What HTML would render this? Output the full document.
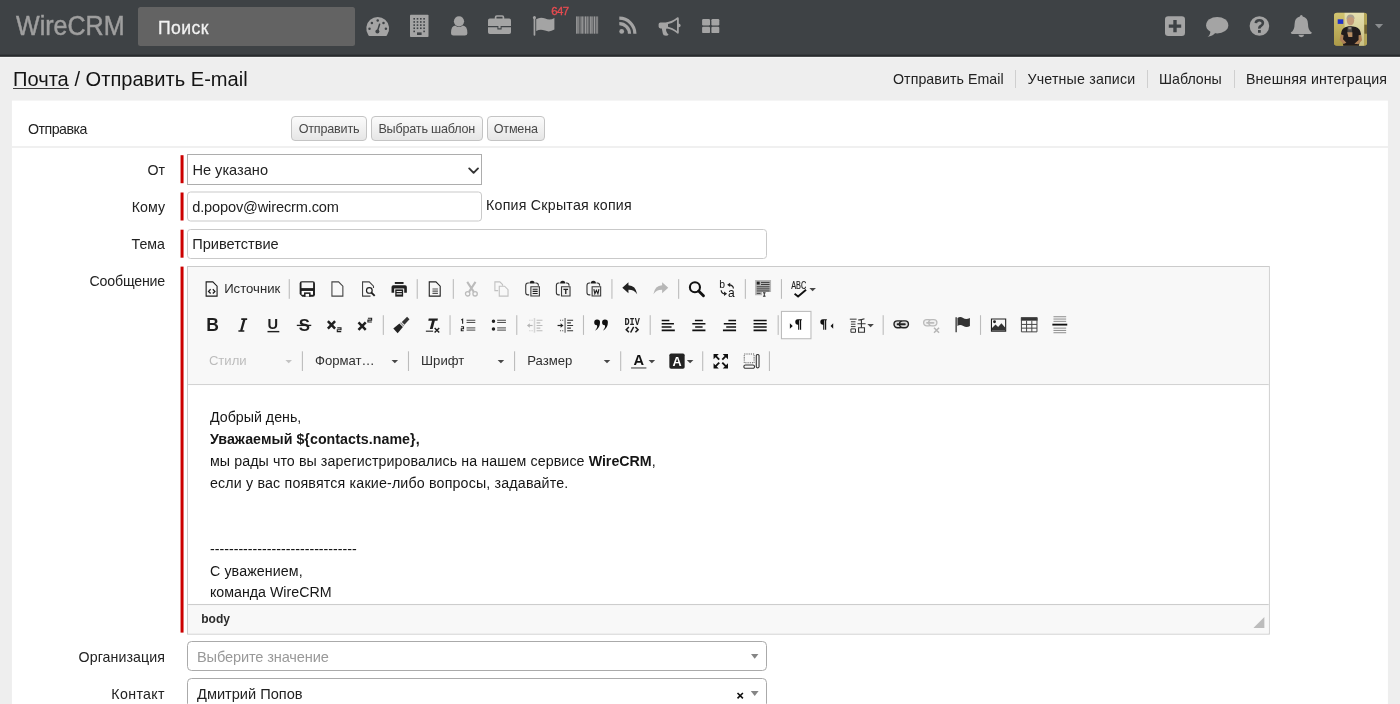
<!DOCTYPE html>
<html lang="ru">
<head>
<meta charset="utf-8">
<title>WireCRM</title>
<style>
*{box-sizing:border-box;margin:0;padding:0}
html,body{width:1400px;height:704px;overflow:hidden;background:#eee;font-family:"Liberation Sans",sans-serif;color:#222}
.abs{position:absolute}
#nav{position:absolute;left:0;top:0;width:1400px;height:57.6px;background:linear-gradient(#3e4245 0,#3e4245 54.2px,#2a2d30 54.9px,#25282a 56.2px,#6b6d6e 56.8px,#f6f6f6 57.2px,#f4f4f4 57.6px)}
#brand{position:absolute;left:16.4px;top:9px;font-size:27px;line-height:34px;color:#9f9f9f;white-space:nowrap;transform:scaleX(.928);transform-origin:0 0;-webkit-text-stroke:.5px #9d9d9d}
#search{position:absolute;left:138px;top:7px;width:216.5px;height:39px;background:#636363;border-radius:2.5px}
#search span{position:absolute;left:20px;top:10px;font-size:17.6px;line-height:22px;color:#f2f2f2;letter-spacing:.45px;-webkit-text-stroke:.3px #f2f2f2}
.nico{position:absolute;fill:#a3a3a3}
#badge{position:absolute;left:551.2px;top:5.2px;font-size:11.4px;line-height:13px;color:#e64b50;letter-spacing:-.6px;-webkit-text-stroke:.35px #e64b50}
#title{position:absolute;left:13px;top:66px;font-size:20.1px;line-height:26px;color:#141414;white-space:nowrap}
#title u{text-decoration:none}
#tul{position:absolute;left:13px;top:87.5px;width:56.3px;height:1.5px;background:#3a3a3a}
.sub{position:absolute;top:70px;font-size:14.2px;line-height:18px;color:#222;white-space:nowrap}
.subsep{position:absolute;top:70px;width:1.1px;height:18px;background:#cfcfcf}
#panel{position:absolute;left:12px;top:100px;width:1376.2px;height:620px;background:#fff;transform:translate(-.1px,.6px)}
.lbl{position:absolute;font-size:14.2px;line-height:18px;color:#222;white-space:nowrap;text-align:right;width:150px;left:15px}
.btn{position:absolute;top:116px;height:25px;padding-top:1px;border:1px solid #c4c4c4;border-radius:4px;background:linear-gradient(#fbfbfb,#e6e6e6);font-size:12.6px;line-height:23.5px;color:#484848;letter-spacing:-.2px;text-align:center;white-space:nowrap}
.red{position:absolute;left:181px;width:3px;background:#cc0000;transform:translateX(-.45px)}
.inp{position:absolute;left:187px;height:30px;border:1px solid #c9c9c9;border-radius:3.5px;background:#fff;font-size:14.6px;line-height:28px;padding-left:4.2px;color:#222;white-space:nowrap}
.s2{position:absolute;left:187px;width:579.5px;height:30px;border:1.1px solid #aaa;border-radius:4.5px;background:#fff;font-size:14.6px;line-height:31px;padding-left:9px;color:#222;white-space:nowrap}
.s2 i{position:absolute;right:6.9px;top:12px;width:7.8px;height:5px;background:#858585;clip-path:polygon(0 0,100% 0,50% 100%)}

#ed{position:absolute;left:187.3px;top:265.8px;width:989.6px;transform:scale(1.09375);transform-origin:0 0;border:1px solid #cbcbcb;background:#fff;font-size:12px;color:#484848}
.ctop{background:#f8f8f8;border-bottom:1px solid #cdcdcd;padding:6px 8px 2px;height:108px}
.row{height:33px;padding-top:1px;white-space:nowrap;font-size:0}
.cb{display:inline-block;vertical-align:top;height:26px;padding:4px 6px;position:relative}
.cb.on{background:#fff;border:1px solid #bcbcbc;padding:3px 5px}
.ci{display:inline-block;vertical-align:top;width:16px;height:16px;margin-top:1px;overflow:visible}
.cb.dis .ci{opacity:.3}
.cl{display:inline-block;vertical-align:top;font-size:12px;line-height:17px;margin-top:1px;padding-left:3px;width:54.2px;color:#2a2a2a;letter-spacing:0}
.ar{display:inline-block;vertical-align:top;margin:8px 0 0 1px;width:0;height:0;border-left:3px solid transparent;border-right:3px solid transparent;border-top:3px solid #474747}
.sp{display:inline-block;vertical-align:top;width:1px;height:18px;margin:4px 2px 0;background:#bcbcbc}
.co{display:inline-block;vertical-align:top;width:97px;height:28px;position:relative;margin-top:-1px}
.co:after{content:"";position:absolute;right:0;top:5px;height:18px;border-right:1px solid #bcbcbc}
.ct{position:absolute;left:11px;top:.4px;transform:translateY(.8px);font-size:12px;line-height:26px;color:#303030}
.co.dis .ct{opacity:.3}.co.dis .ca{opacity:.3}
.ca{position:absolute;left:81px;top:13px;width:0;height:0;border-left:3px solid transparent;border-right:3px solid transparent;border-top:3px solid #484848}
.cbody{height:200px;overflow:hidden;padding:20px;font-size:13px;line-height:20px;color:#161616;background:#fff}
.cbody p{margin:0;white-space:nowrap}
.cbot{position:relative;height:26.6px;border-top:1px solid #cdcdcd;background:#f8f8f8}
.pth{position:absolute;left:12px;top:5.5px;font-size:11px;line-height:13px;font-weight:bold;color:#2c2c2c}
.rsz{position:absolute;right:4px;bottom:4.2px;width:0;height:0;border-style:solid;border-width:10px 10px 0 0;border-color:transparent #bcbcbc transparent transparent}

</style>
</head>
<body>
<div id="wrap" style="position:absolute;left:0;top:0;width:1400px;height:704px;will-change:transform">
<div id="nav">
  <div id="brand">WireCRM</div>
  <div id="search"><span>Поиск</span></div>
  <div id="badge">647</div>
<svg style="position:absolute;left:0;top:0" width="1400" height="56" viewBox="0 0 1400 56"><path fill="#a4a4a4" d="M369.58 35.9Q368.58 35.9 368.18 34.70A11.4 11.4 0 1 1 387.22 34.70Q386.82 35.9 385.82 35.9Z"/><circle cx="369.50" cy="28.80" r="1.25" fill="#3e4245"/><circle cx="371.90" cy="23.00" r="1.25" fill="#3e4245"/><circle cx="377.70" cy="20.60" r="1.25" fill="#3e4245"/><circle cx="383.50" cy="23.00" r="1.25" fill="#3e4245"/><circle cx="385.90" cy="28.80" r="1.25" fill="#3e4245"/><circle cx="377.4" cy="31.400000000000002" r="2" fill="#3e4245"/><path d="M377.4 31.400000000000002L379.59999999999997 24.200000000000003" stroke="#3e4245" stroke-width="1.5" stroke-linecap="round"/><rect x="410" y="14.7" width="18.5" height="22.4" rx="0.8" fill="#a4a4a4"/><rect x="413.40" y="18.00" width="1.6" height="1.6" fill="#3e4245"/><rect x="413.40" y="21.15" width="1.6" height="1.6" fill="#3e4245"/><rect x="413.40" y="24.30" width="1.6" height="1.6" fill="#3e4245"/><rect x="413.40" y="27.45" width="1.6" height="1.6" fill="#3e4245"/><rect x="413.40" y="30.60" width="1.6" height="1.6" fill="#3e4245"/><rect x="416.70" y="18.00" width="1.6" height="1.6" fill="#3e4245"/><rect x="416.70" y="21.15" width="1.6" height="1.6" fill="#3e4245"/><rect x="416.70" y="24.30" width="1.6" height="1.6" fill="#3e4245"/><rect x="416.70" y="27.45" width="1.6" height="1.6" fill="#3e4245"/><rect x="420.00" y="18.00" width="1.6" height="1.6" fill="#3e4245"/><rect x="420.00" y="21.15" width="1.6" height="1.6" fill="#3e4245"/><rect x="420.00" y="24.30" width="1.6" height="1.6" fill="#3e4245"/><rect x="420.00" y="27.45" width="1.6" height="1.6" fill="#3e4245"/><rect x="423.30" y="18.00" width="1.6" height="1.6" fill="#3e4245"/><rect x="423.30" y="21.15" width="1.6" height="1.6" fill="#3e4245"/><rect x="423.30" y="24.30" width="1.6" height="1.6" fill="#3e4245"/><rect x="423.30" y="27.45" width="1.6" height="1.6" fill="#3e4245"/><rect x="423.30" y="30.60" width="1.6" height="1.6" fill="#3e4245"/><rect x="417" y="32.4" width="4.6" height="2.6" fill="#3e4245"/><circle cx="459" cy="21.3" r="5.1" fill="#a4a4a4"/><path fill="#a4a4a4" d="M451 33.2Q451 26 455.2 25.6Q459 28.6 462.8 25.6Q467.4 26 467.4 33.2Q467.4 35.5 464.8 35.5H453.4Q451 35.5 451 33.2Z"/><path fill="none" stroke="#a4a4a4" stroke-width="1.7" d="M495.6 19V17.2Q495.6 16 496.8 16H502.2Q503.4 16 503.4 17.2V19"/><path fill="#a4a4a4" d="M489.8 18.4H509.2Q511 18.4 511 20.2V26H488V20.2Q488 18.4 489.8 18.4Z"/><path fill="#a4a4a4" d="M488 27.2H497.4V29.4H501.6V27.2H511V32.2Q511 34 509.2 34H489.8Q488 34 488 32.2Z"/><rect x="498.4" y="26" width="2.2" height="2.3" fill="#a4a4a4"/><rect x="533.6" y="17.4" width="1.7" height="18.3" rx="0.8" fill="#a4a4a4"/><circle cx="534.45" cy="17.4" r="1.5" fill="#a4a4a4"/><path fill="#a4a4a4" d="M536.2 19.2Q540.4 16.4 545.2 18.6T554.4 18V29.6Q549.6 32.6 545 30.6T536.2 31Z"/><rect x="576.10" y="16.4" width="1.6" height="17.3" fill="#a4a4a4" opacity="0.9"/><rect x="578.30" y="16.4" width="0.8" height="17.3" fill="#a4a4a4" opacity="0.9"/><rect x="579.70" y="16.4" width="0.8" height="17.3" fill="#a4a4a4" opacity="0.9"/><rect x="581.30" y="16.4" width="1.6" height="17.3" fill="#a4a4a4" opacity="0.9"/><rect x="583.50" y="16.4" width="0.8" height="17.3" fill="#a4a4a4" opacity="0.9"/><rect x="584.90" y="16.4" width="1.6" height="17.3" fill="#a4a4a4" opacity="0.9"/><rect x="587.10" y="16.4" width="0.8" height="17.3" fill="#a4a4a4" opacity="0.9"/><rect x="588.50" y="16.4" width="0.8" height="17.3" fill="#a4a4a4" opacity="0.9"/><rect x="590.10" y="16.4" width="1.6" height="17.3" fill="#a4a4a4" opacity="0.9"/><rect x="592.30" y="16.4" width="0.8" height="17.3" fill="#a4a4a4" opacity="0.9"/><rect x="593.70" y="16.4" width="1.6" height="17.3" fill="#a4a4a4" opacity="0.9"/><rect x="595.90" y="16.4" width="0.8" height="17.3" fill="#a4a4a4" opacity="0.9"/><rect x="597.30" y="16.4" width="0.8" height="17.3" fill="#a4a4a4" opacity="0.9"/><circle cx="621.6999999999999" cy="31.4" r="2.4" fill="#a4a4a4"/><path fill="none" stroke="#a4a4a4" stroke-width="3.2" d="M619.3 23.599999999999998A10.2 10.2 0 0 1 629.5 33.8M619.3 18.199999999999996A15.6 15.6 0 0 1 634.9 33.8"/><path fill="#a4a4a4" d="M660.4 22.4H665.6Q672 21.6 677.4 17.2Q678.8 17 678.8 18.4V23.6Q680.7 24 680.7 25.4T678.8 27.2V32.4Q678.8 33.8 677.4 33.6Q672 29.2 666.6 28.6Q665.4 29.6 666.4 31.4Q667 33.6 668.6 34.4Q668 35.8 665.2 35.6Q663.4 35.6 662.8 33.4L661.8 28.4H660.4Q658.6 28.4 658.6 26.6V24.2Q658.6 22.4 660.4 22.4Z"/><path fill="#3e4245" d="M677 19.8V31Q672.6 27.6 668 26.8V24Q672.6 23.2 677 19.8Z"/><rect x="702.10" y="19.10" width="7.9" height="6.4" rx="1.2" fill="#a4a4a4"/><rect x="702.10" y="26.70" width="7.9" height="6.4" rx="1.2" fill="#a4a4a4"/><rect x="711.40" y="19.10" width="7.9" height="6.4" rx="1.2" fill="#a4a4a4"/><rect x="711.40" y="26.70" width="7.9" height="6.4" rx="1.2" fill="#a4a4a4"/><rect x="1165" y="16.3" width="20" height="19.6" rx="3.2" fill="#a4a4a4"/><path stroke="#3e4245" stroke-width="3.4" d="M1168.8 26.1H1181.2M1175 19.9V32.3"/><ellipse cx="1217.2" cy="25.2" rx="11.1" ry="8.3" fill="#a4a4a4"/><path fill="#a4a4a4" d="M1210.4 30.4Q1210.6 34.6 1207.6 36.8Q1212.6 36.4 1215.6 32.6Z"/><circle cx="1259.4" cy="26" r="9.8" fill="#a4a4a4"/><path fill="none" stroke="#3e4245" stroke-width="2.6" d="M1255.8 23.2Q1256 20.2 1259.4 20.2T1262.9 23Q1262.9 24.8 1261 25.8T1259.4 28.6"/><rect x="1258" y="30" width="2.8" height="2.8" fill="#3e4245"/><path fill="#a4a4a4" d="M1301.3 14.9Q1302.7 14.9 1302.7 16.4Q1308 17.6 1308 24Q1308 30.4 1311.8 32.6Q1311.8 34 1310.4 34H1292.2Q1290.8 34 1290.8 32.6Q1294.6 30.4 1294.6 24Q1294.6 17.6 1299.9 16.4Q1299.9 14.9 1301.3 14.9Z"/><path fill="#a4a4a4" d="M1298.4 34.8H1304.2Q1303.8 37.2 1301.3 37.2T1298.4 34.8Z"/><path fill="#8a8d8f" d="M1374.9 24H1383.1L1379 28.5Z"/><g transform="translate(1334,12.7)"><clipPath id="avc"><rect width="33" height="33" rx="3"/></clipPath>
<filter id="avb" x="-10%" y="-10%" width="120%" height="120%"><feGaussianBlur stdDeviation="0.55"/></filter>
<linearGradient id="avg1" x1="0" y1="0" x2="0" y2="1"><stop offset="0" stop-color="#d3c672"/><stop offset="1" stop-color="#ab9947"/></linearGradient>
<linearGradient id="avg2" x1="0" y1="0" x2="0" y2="1"><stop offset="0" stop-color="#e6e0b0"/><stop offset="1" stop-color="#c9c084"/></linearGradient>
<g clip-path="url(#avc)"><rect width="33" height="33" fill="#b9a955"/><g filter="url(#avb)">
<rect x="-1" y="-1" width="12" height="35" fill="url(#avg1)"/><rect x="10.6" y="-1" width="20" height="35" fill="url(#avg2)"/>
<rect x="30" y="-1" width="4" height="35" fill="#b3a558"/><rect x="30.4" y="12" width="3" height="9" fill="#6f6232"/>
<rect x="3.7" y="6.6" width="5.6" height="4.6" fill="#2233c8"/>
<ellipse cx="16.5" cy="7.8" rx="3.7" ry="4.8" fill="#c29a78"/><path d="M12.4 7Q12.6 1.8 16.6 1.9T20.6 6.6Q18.6 4 16.4 4.4T12.4 7Z" fill="#a9a08f"/>
<path d="M9.4 34Q8.6 27 7 21.4Q7.4 15.8 11.8 14.4Q16.6 12.8 21.8 14.4Q26.4 15.8 27 21.4Q25.6 27 24.8 34Z" fill="#211d1e"/>
<path d="M6.8 21.6L5.6 27.4L9.6 31.4L12.4 30L9 26.6L9.6 22.6Z" fill="#b08258"/><path d="M27.2 22L28 27.6L24.4 31.6L20.4 31L24.6 27.4L24.6 22.6Z" fill="#b08258"/>
<rect x="13.5" y="13.6" width="4.6" height="6.6" rx="0.8" fill="#4a4543"/><rect x="14.4" y="14.4" width="2.8" height="2.2" fill="#8f867c"/>
<path d="M13.2 19.6H18.4V24.4H14.4Z" fill="#b88d63"/>
</g></g></g></svg>
</div>
<div id="tul"></div>
<div id="title"><u>Почта</u> / Отправить E-mail</div>
<div class="sub" style="left:893px;letter-spacing:.06px">Отправить Email</div>
<div class="subsep" style="left:1015px"></div>
<div class="sub" style="left:1027.5px;letter-spacing:.19px">Учетные записи</div>
<div class="subsep" style="left:1146.5px"></div>
<div class="sub" style="left:1159px">Шаблоны</div>
<div class="subsep" style="left:1234.3px"></div>
<div class="sub" style="left:1246px;letter-spacing:.15px">Внешняя интеграция</div>

<div id="panel"></div>
<div class="abs" style="left:28px;top:120px;font-size:14.2px;line-height:18px;letter-spacing:-.5px">Отправка</div>
<div class="btn" style="left:291px;width:76px">Отправить</div>
<div class="btn" style="left:371px;width:111.5px">Выбрать шаблон</div>
<div class="btn" style="left:487px;width:57.5px">Отмена</div>
<div class="abs" style="left:12px;top:146px;width:1376px;height:1.6px;background:#f0f0f0"></div>

<div class="lbl" style="top:161px">От</div>
<div class="red" style="top:155px;height:28px;transform:translate(-.45px,.2px)"></div>
<div class="inp" style="top:154px;width:295px;height:30.6px;border-radius:0;border:1px solid #adadad;line-height:30.6px;padding-left:4.4px">Не указано<svg style="position:absolute;left:279px;top:10.6px" width="14" height="10" viewBox="0 0 14 10"><path d="M2.2 2.4L6.6 6.8L11 2.4" fill="none" stroke="#333" stroke-width="1.9" stroke-linecap="round" stroke-linejoin="round"/></svg></div>

<div class="lbl" style="top:198px">Кому</div>
<div class="red" style="top:192px;height:28px;transform:translate(-.45px,.5px)"></div>
<div class="inp" style="top:191px;width:295px;transform:translateY(.5px);letter-spacing:-.15px">d.popov@wirecrm.com</div>
<div class="abs" style="left:486px;top:196px;font-size:14.2px;line-height:18px;white-space:nowrap;letter-spacing:.24px">Копия Скрытая копия</div>

<div class="lbl" style="top:235px">Тема</div>
<div class="red" style="top:229px;height:28px;transform:translate(-.45px,.7px)"></div>
<div class="inp" style="top:229px;width:579.5px">Приветствие</div>

<div class="lbl" style="top:272px;letter-spacing:-.19px">Сообщение</div>
<div class="red" style="top:266px;height:366px;transform:translate(-.45px,.6px)"></div>

<div id="ed"><div class="ctop"><div class="row"><span class="cb src"><svg class="ci" viewBox="0 0 16 16"><path d="M2.5 1.5H8.6L12.5 5.4V14.5H2.5Z" fill="none" stroke="#1a1a1a" stroke-width="1" /><path d="M6.6 8.2L4.7 10.2L6.6 12.2M8.6 8.2L10.5 10.2L8.6 12.2" fill="none" stroke="#1f1f1f" stroke-width="1.2" /></svg><span class="cl">Источник</span></span><span class="sp"></span><span class="cb"><svg class="ci" viewBox="0 0 16 16"><path d="M3 1H13Q15 1 15 3V13Q15 15 13 15H3.4L1 12.6V3Q1 1 3 1Z" fill="#1f1f1f" /><path d="M2.7 2H13.3V7.2H2.7Z" fill="#f6f6f6" /><path d="M2.8 9.8H13.2V13.3H2.8Z" fill="#fff" /><path d="M5 11.1H11V15H5Z" fill="#1f1f1f" /><path d="M6.4 12.5H9.6V15H6.4Z" fill="#fff" /></svg></span><span class="cb"><svg class="ci" viewBox="0 0 16 16"><path d="M2.5 1.5H8.6L12.5 5.4V14.5H2.5Z" fill="none" stroke="#444" stroke-width="1" /></svg></span><span class="cb"><svg class="ci" viewBox="0 0 16 16"><path d="M9.8 14.5H2.5V1.5H8.6L12.5 5.4V7" fill="none" stroke="#444" stroke-width="1" /><path d="M11.3 9.3A2.6 2.6 0 1 1 6.1 9.3A2.6 2.6 0 1 1 11.3 9.3Z" fill="none" stroke="#1f1f1f" stroke-width="1.1" /><path d="M10.6 11.3L13.6 14.3" fill="none" stroke="#1f1f1f" stroke-width="1.8" /></svg></span><span class="cb"><svg class="ci" viewBox="0 0 16 16"><path d="M4 1.6H12V3.4H4Z" fill="#1f1f1f" /><path d="M2.6 4.6H13.4Q15 4.6 15 6.2V11.4H12.6V7.6H3.4V11.4H1V6.2Q1 4.6 2.6 4.6Z" fill="#1f1f1f" /><path d="M4.4 8.4H11.6V15H4.4Z" fill="#1f1f1f" /><path d="M5.6 9.8H10.4V10.8H5.6ZM5.6 12H10.4V13H5.6Z" fill="#eee" /></svg></span><span class="sp"></span><span class="cb"><svg class="ci" viewBox="0 0 16 16"><path d="M2.5 1.5H8.6L12.5 5.4V14.5H2.5Z" fill="none" stroke="#222" stroke-width="1" /><path d="M5.4 8H10.4M5.4 10H10.4M5.4 12H10.4" fill="none" stroke="#555" stroke-width="1" /></svg></span><span class="sp"></span><span class="cb dis"><svg class="ci" viewBox="0 0 16 16"><path d="M4.2 1.5L10.2 10.6M11.8 1.5L5.8 10.6" fill="none" stroke="#333" stroke-width="1.9" /><path d="M6.6 12.4A2 2 0 1 1 2.6 12.4A2 2 0 1 1 6.6 12.4ZM13.4 12.4A2 2 0 1 1 9.4 12.4A2 2 0 1 1 13.4 12.4Z" fill="none" stroke="#333" stroke-width="1.2" /></svg></span><span class="cb dis"><svg class="ci" viewBox="0 0 16 16"><path d="M4.5 9.5H1.5V1.5H6L8.5 4V5" fill="none" stroke="#444" stroke-width="1" /><path d="M5.5 5.5H10.4L13.5 8.6V14.5H5.5Z" fill="none" stroke="#444" stroke-width="1" /></svg></span><span class="cb"><svg class="ci" viewBox="0 0 16 16"><path d="M4.6 2.6H3.8Q1.7 2.6 1.7 4.8V11.2Q1.7 13.4 3.8 13.4H4.8M10.4 2.6H11.2Q13.3 2.6 13.3 4.8V5" fill="none" stroke="#333" stroke-width="1" /><path d="M5.1 3Q5.1 0.5 7.5 0.5Q9.9 0.5 9.9 3Z" fill="#1f1f1f" /><path d="M6.4 6H14.2V14.4H6.4Z" fill="#efefef" /><path d="M6.4 6H14.2V14.4H6.4Z" fill="none" stroke="#3a3a3a" stroke-width="1" /><path d="M8 8.2H12.6M8 10.2H12.6M8 12.2H12.6" fill="none" stroke="#1f1f1f" stroke-width="1" /></svg></span><span class="cb"><svg class="ci" viewBox="0 0 16 16"><path d="M4.6 2.6H3.8Q1.7 2.6 1.7 4.8V11.2Q1.7 13.4 3.8 13.4H4.8M10.4 2.6H11.2Q13.3 2.6 13.3 4.8V5" fill="none" stroke="#333" stroke-width="1" /><path d="M5.1 3Q5.1 0.5 7.5 0.5Q9.9 0.5 9.9 3Z" fill="#1f1f1f" /><path d="M6.4 6H14.2V14.4H6.4Z" fill="#efefef" /><path d="M6.4 6H14.2V14.4H6.4Z" fill="none" stroke="#3a3a3a" stroke-width="1" /><path d="M8.2 8.4H12.4M10.3 8.4V12.6" fill="none" stroke="#1f1f1f" stroke-width="1.2" /></svg></span><span class="cb"><svg class="ci" viewBox="0 0 16 16"><path d="M4.6 2.6H3.8Q1.7 2.6 1.7 4.8V11.2Q1.7 13.4 3.8 13.4H4.8M10.4 2.6H11.2Q13.3 2.6 13.3 4.8V5" fill="none" stroke="#333" stroke-width="1" /><path d="M5.1 3Q5.1 0.5 7.5 0.5Q9.9 0.5 9.9 3Z" fill="#1f1f1f" /><path d="M6.4 6H14.2V14.4H6.4Z" fill="#efefef" /><path d="M6.4 6H14.2V14.4H6.4Z" fill="none" stroke="#3a3a3a" stroke-width="1" /><path d="M8 8.2L8.9 12.4L10.3 9.2L11.7 12.4L12.6 8.2" fill="none" stroke="#1f1f1f" stroke-width="1" /></svg></span><span class="sp"></span><span class="cb"><svg class="ci" viewBox="0 0 16 16"><path d="M6.6 1.8V4.6Q13.2 4.8 14.6 12.8Q11.6 8.6 6.6 8.8V11.8L1 6.8Z" fill="#222" /></svg></span><span class="cb dis"><svg class="ci" viewBox="0 0 16 16"><path d="M9.4 1.8V4.6Q2.8 4.8 1.4 12.8Q4.4 8.6 9.4 8.8V11.8L15 6.8Z" fill="#222" /></svg></span><span class="sp"></span><span class="cb"><svg class="ci" viewBox="0 0 16 16"><path d="M11 6.4A4.6 4.6 0 1 1 1.8 6.4A4.6 4.6 0 1 1 11 6.4Z" fill="none" stroke="#111" stroke-width="1.9" /><path d="M9.8 9.8L14.2 14.2" fill="none" stroke="#111" stroke-width="2.6" stroke-linecap="round"/></svg></span><span class="cb"><svg class="ci" viewBox="0 0 16 16"><text x="0.6" y="7.4" font-family="Liberation Sans" font-size="9.5" fill="#111">b</text><text x="8.6" y="15.2" font-family="Liberation Sans" font-size="11" fill="#111">a</text><path d="M13.6 7.6Q13.4 4.4 9.6 4.2" fill="none" stroke="#1f1f1f" stroke-width="1.1" /><path d="M10.6 2.2V6.2L7.8 4.2Z" fill="#1f1f1f" /><path d="M2.4 9.2Q2.6 12.2 5.6 12.4" fill="none" stroke="#1f1f1f" stroke-width="1.1" /><path d="M5 10.4V14.4L7.8 12.4Z" fill="#1f1f1f" /></svg></span><span class="sp"></span><span class="cb"><svg class="ci" viewBox="0 0 16 16"><g transform="translate(0.2,-0.6)"><path d="M0.2 0.4H14.8V11.4H6.6V14.4H0.2Z" fill="#b6b6b6" /><path d="M1.7 1.9H4.4V4.6H1.7Z" fill="#222" /><path d="M5.6 2.6H13.4M5.6 4.5H13.4M1.7 6.6H13.4M1.7 8.5H13.4M1.7 10.4H13.4M1.7 12.6H5.2" fill="none" stroke="#3a3a3a" stroke-width="0.9" /><path d="M8.6 12.1V15.2M7.4 12.1H9.8M7.4 15.2H9.8" fill="none" stroke="#111" stroke-width="0.8" /></g></svg></span><span class="sp"></span><span class="cb"><svg class="ci" viewBox="0 0 16 16"><text x="0.4" y="8.4" font-family="Liberation Sans" font-size="9.2" fill="#222" stroke="#222" stroke-width="0.15" textLength="13.8" lengthAdjust="spacingAndGlyphs">ABC</text><path d="M3.5 12.4L6.7 14.9L14 8.7" fill="none" stroke="#111" stroke-width="1.7" /></svg><b class="ar"></b></span></div><div class="row"><span class="cb"><svg class="ci" viewBox="0 0 16 16"><text x="2.6" y="13.6" font-family="Liberation Sans" font-size="16" font-weight="bold" font-style="normal" fill="#1f1f1f" >B</text></svg></span><span class="cb"><svg class="ci" viewBox="0 0 16 16"><path d="M6.6 2.6H12M4 13.4H9.4" fill="none" stroke="#1f1f1f" stroke-width="1.5" /><path d="M9.5 2.6L6.5 13.4" fill="none" stroke="#1f1f1f" stroke-width="2.1" /></svg></span><span class="cb"><svg class="ci" viewBox="0 0 16 16"><text x="2.7" y="11.4" font-family="Liberation Sans" font-size="13.4" font-weight="bold" font-style="normal" fill="#1f1f1f" >U</text><path d="M2.6 14H13.4" fill="none" stroke="#1f1f1f" stroke-width="1.3" /></svg></span><span class="cb"><svg class="ci" viewBox="0 0 16 16"><text x="3.2" y="13.3" font-family="Liberation Sans" font-size="15.4" font-weight="bold" font-style="normal" fill="#1f1f1f" >S</text><path d="M1.4 8.3H14.6" fill="none" stroke="#1f1f1f" stroke-width="1.2" /></svg></span><span class="cb"><svg class="ci" viewBox="0 0 16 16"><path d="M1.8 4.4L8.4 11.2M8.4 4.4L1.8 11.2" fill="none" stroke="#1f1f1f" stroke-width="2.3" /><path d="M10.4 10.6H13.8V12.299999999999999H10.4V14.0H14.0" fill="none" stroke="#1f1f1f" stroke-width="1" /></svg></span><span class="cb"><svg class="ci" viewBox="0 0 16 16"><path d="M1.8 5.6L8.4 12.4M8.4 5.6L1.8 12.4" fill="none" stroke="#1f1f1f" stroke-width="2.3" /><path d="M10.4 1.8H13.8V3.5H10.4V5.2H14.0" fill="none" stroke="#1f1f1f" stroke-width="1" /></svg></span><span class="sp"></span><span class="cb"><svg class="ci" viewBox="0 0 16 16"><path d="M13.2 0.4L15.4 2.6L10.8 7.6L8.4 5.2Z" fill="#333" /><path d="M7.6 5.4L10.6 8.4L9.8 9.2L6.8 6.2Z" fill="#8a8a8a" /><path d="M6.2 6.6L9.4 9.8L4.6 15.4L0.6 11.2Z" fill="#222" /></svg></span><span class="cb"><svg class="ci" viewBox="0 0 16 16"><path d="M5 2H13.4L13 4H10.6L8.6 11.6H6L8 4H4.6Z" fill="#1f1f1f" /><path d="M2.4 13.6H9" fill="none" stroke="#1f1f1f" stroke-width="1" /><path d="M10.4 10.6L14.6 14.8M14.6 10.6L10.4 14.8" fill="none" stroke="#1f1f1f" stroke-width="1.3" /></svg></span><span class="sp"></span><span class="cb"><svg class="ci" viewBox="0 0 16 16"><path d="M1.8 3.4L3 2.6V6.8" fill="none" stroke="#1f1f1f" stroke-width="1" /><path d="M1.6 9.6H3.8V11.4H1.8V13.2H4" fill="none" stroke="#1f1f1f" stroke-width="1" /><path d="M6.6 3.6H14.6M6.6 5.6H14.6" fill="none" stroke="#444" stroke-width="0.9" /><path d="M6.6 10.6H14.6M6.6 12.6H14.6" fill="none" stroke="#444" stroke-width="0.9" /></svg></span><span class="cb"><svg class="ci" viewBox="0 0 16 16"><path d="M4.8 4.6A1.6 1.6 0 1 1 1.6 4.6A1.6 1.6 0 1 1 4.8 4.6ZM4.8 11.6A1.6 1.6 0 1 1 1.6 11.6A1.6 1.6 0 1 1 4.8 11.6Z" fill="#1f1f1f" /><path d="M6.6 3.6H14.6M6.6 5.6H14.6" fill="none" stroke="#444" stroke-width="0.9" /><path d="M6.6 10.6H14.6M6.6 12.6H14.6" fill="none" stroke="#444" stroke-width="0.9" /></svg></span><span class="sp"></span><span class="cb dis"><svg class="ci" viewBox="0 0 16 16"><path d="M7 1.6H8.4V15H7Z" fill="#888" /><path d="M9.6 3.6H15M9.6 6H13M9.6 8.4H15M9.6 10.8H13M9.6 13.2H15" fill="none" stroke="#333" stroke-width="1" /><path d="M2.4 8.4H6" fill="none" stroke="#1f1f1f" stroke-width="1.1" /><path d="M3.4 6.4V10.4L0.8 8.4Z" fill="#1f1f1f" /><path d="M3 3.6H4M5 3.6H6M3 13.2H4M5 13.2H6" fill="none" stroke="#555" stroke-width="1" /></svg></span><span class="cb"><svg class="ci" viewBox="0 0 16 16"><path d="M7 1.6H8.4V15H7Z" fill="#888" /><path d="M9.6 3.6H15M9.6 6H13M9.6 8.4H15M9.6 10.8H13M9.6 13.2H15" fill="none" stroke="#333" stroke-width="1" /><path d="M0.8 8.4H4.2" fill="none" stroke="#1f1f1f" stroke-width="1.1" /><path d="M3.6 6.4V10.4L6.2 8.4Z" fill="#1f1f1f" /><path d="M3 3.6H4M5 3.6H6M3 13.2H4M5 13.2H6" fill="none" stroke="#555" stroke-width="1" /></svg></span><span class="sp"></span><span class="cb"><svg class="ci" viewBox="0 0 16 16"><path d="M4.0 3A2.6 2.6 0 0 1 6.6 5.8Q6.6 10.6 2.0 13.2Q4.8 10 3.8 8.2A2.6 2.6 0 0 1 4.0 3Z" fill="#111" /><path d="M11.2 3A2.6 2.6 0 0 1 13.8 5.8Q13.8 10.6 9.2 13.2Q12.0 10 11.0 8.2A2.6 2.6 0 0 1 11.2 3Z" fill="#111" /></svg></span><span class="cb"><svg class="ci" viewBox="0 0 16 16"><text x="1" y="8" font-family="Liberation Mono" font-size="9.6" font-weight="bold" fill="#222" textLength="14" lengthAdjust="spacingAndGlyphs">DIV</text><path d="M5 9.8L2.6 12.2L5 14.6M11 9.8L13.4 12.2L11 14.6M9.4 9.6L6.6 14.8" fill="none" stroke="#1f1f1f" stroke-width="1.4" /></svg></span><span class="sp"></span><span class="cb"><svg class="ci" viewBox="0 0 16 16"><path d="M2 3.8H9M2 6.8H13.2M2 9.8H11M2 12.8H14" fill="none" stroke="#111" stroke-width="1.5" /></svg></span><span class="cb"><svg class="ci" viewBox="0 0 16 16"><path d="M4.4 3.8H11.6M2 6.8H14M4.6 9.8H11.4M2 12.8H14" fill="none" stroke="#111" stroke-width="1.5" /></svg></span><span class="cb"><svg class="ci" viewBox="0 0 16 16"><path d="M7 3.8H14M2.8 6.8H14M5 9.8H14M2 12.8H14" fill="none" stroke="#111" stroke-width="1.5" /></svg></span><span class="cb"><svg class="ci" viewBox="0 0 16 16"><path d="M2 3.8H14M2 6.8H14M2 9.8H14M2 12.8H14" fill="none" stroke="#111" stroke-width="1.5" /></svg></span><span class="sp"></span><span class="cb on"><svg class="ci" viewBox="0 0 16 16"><path d="M9.5 2.6H13.100000000000001V3.7H12.5V12.2H11.45V3.7H10.8V12.2H9.75V7.6A2.5 2.5 0 0 1 9.5 2.6Z" fill="#111" /><path d="M2.2 6.4L4.8 8.9L2.2 11.4Z" fill="#111" /></svg></span><span class="cb"><svg class="ci" viewBox="0 0 16 16"><path d="M4.4 2.6H8.0V3.7H7.3999999999999995V12.2H6.35V3.7H5.7V12.2H4.65V7.6A2.5 2.5 0 0 1 4.4 2.6Z" fill="#111" /><path d="M13.8 6.4L11.4 8.9L13.8 11.4Z" fill="#111" /></svg></span><span class="cb"><svg class="ci" viewBox="0 0 16 16"><path d="M1 2.6H7.2M2 5H6.2M2 7.2H6.2M2 9.4H6.2" fill="none" stroke="#333" stroke-width="0.9" /><path d="M2 11.5H6.2V14.6H2Z" fill="none" stroke="#333" stroke-width="0.9" /><path d="M8.6 3.4Q11.6 3.2 14.4 2.2M8 6.8H15.4M11.6 3V10.4" fill="none" stroke="#333" stroke-width="1" /><path d="M9 10.5H14.4V14.6H9Z" fill="none" stroke="#333" stroke-width="1" /></svg><b class="ar"></b></span><span class="sp"></span><span class="cb"><svg class="ci" viewBox="0 0 16 16"><g transform="translate(0,-0.7)"><path d="M4.5 4.9H6.5A3.1 3.1 0 0 1 6.5 11.1H4.5A3.1 3.1 0 0 1 4.5 4.9Z" fill="#dcdcdc" stroke="#222" stroke-width="1.3"/><path d="M9.5 4.9H11.5A3.1 3.1 0 0 1 11.5 11.1H9.5A3.1 3.1 0 0 1 9.5 4.9Z" fill="#dcdcdc" stroke="#222" stroke-width="1.3"/><path d="M4.8 8H11.2" fill="none" stroke="#222" stroke-width="1.9" stroke-linecap="round"/></g></svg></span><span class="cb dis"><svg class="ci" viewBox="0 0 16 16"><g transform="translate(-0.8,-1.4) scale(0.92)"><path d="M4.5 4.9H6.5A3.1 3.1 0 0 1 6.5 11.1H4.5A3.1 3.1 0 0 1 4.5 4.9Z" fill="#e4e4e4" stroke="#333" stroke-width="1.3"/><path d="M9.5 4.9H11.5A3.1 3.1 0 0 1 11.5 11.1H9.5A3.1 3.1 0 0 1 9.5 4.9Z" fill="#e4e4e4" stroke="#333" stroke-width="1.3"/><path d="M4.8 8H11.2" fill="none" stroke="#333" stroke-width="1.9" stroke-linecap="round"/></g><path d="M10 10.4L14.6 15M14.6 10.4L10 15" fill="none" stroke="#222" stroke-width="1.4" /></svg></span><span class="cb"><svg class="ci" viewBox="0 0 16 16"><path d="M2.2 0.8V14.6" fill="none" stroke="#222" stroke-width="1.1" /><path d="M3.4 1.6Q6 -0.2 8.6 1.6T14.8 1.6V8.8Q11.8 10.6 8.8 8.8T3.4 8.8Z" fill="#333" /></svg></span><span class="sp"></span><span class="cb"><svg class="ci" viewBox="0 0 16 16"><path d="M1.5 2.5H14.5V13.5H1.5Z" fill="none" stroke="#222" stroke-width="1" /><path d="M2 13V10.6L5.2 7.4L7.6 9.8L10.6 6.4L14 10.2V13Z" fill="#333" /><path d="M5.6 5A1.3 1.3 0 1 1 3 5A1.3 1.3 0 1 1 5.6 5Z" fill="#222" /></svg></span><span class="cb"><svg class="ci" viewBox="0 0 16 16"><path d="M0.4 0.9H15.6V4H0.4Z" fill="#333" /><path d="M0.9 1.4H15.1V14.2H0.9ZM0.9 7.4H15.1M0.9 10.8H15.1M5.6 4V14.2M10.4 4V14.2" fill="none" stroke="#444" stroke-width="0.9" /></svg></span><span class="cb"><svg class="ci" viewBox="0 0 16 16"><path d="M2.2 0.4H13.8M2.2 2.5H13.8M2.2 4.6H13.8M2.2 10.8H13.8M2.2 12.9H13.8M2.2 15H13.8" fill="none" stroke="#8a8a8a" stroke-width="0.9" /><path d="M1.2 7.6H14.8" fill="none" stroke="#111" stroke-width="1.7" /></svg></span></div><div class="row"><span class="co dis"><span class="ct">Стили</span><b class="ca"></b></span><span class="co"><span class="ct">Формат…</span><b class="ca"></b></span><span class="co"><span class="ct">Шрифт</span><b class="ca"></b></span><span class="co"><span class="ct">Размер</span><b class="ca"></b></span><span style="display:inline-block;width:2px"></span><span class="cb"><svg class="ci" viewBox="0 0 16 16"><text x="3.2" y="11.4" font-family="Liberation Sans" font-size="13.4" font-weight="bold" fill="#111">A</text><path d="M1 13.4H15V15H1Z" fill="#8a8a8a" /></svg><b class="ar"></b></span><span class="cb"><svg class="ci" viewBox="0 0 16 16"><path d="M2.6 1H13.4Q15 1 15 2.6V13.4Q15 15 13.4 15H2.6Q1 15 1 13.4V2.6Q1 1 2.6 1Z" fill="#222" /><text x="3.9" y="12.6" font-family="Liberation Sans" font-size="11.6" font-weight="bold" fill="#fff">A</text></svg><b class="ar"></b></span><span class="sp"></span><span class="cb"><svg class="ci" viewBox="0 0 16 16"><path d="M14.6 14.6L14.6 9.8L9.8 14.6Z" fill="#111" /><path d="M9.4 9.4L13 13" fill="none" stroke="#111" stroke-width="1.7" /><path d="M1.4000000000000004 14.6L1.4000000000000004 9.8L6.2 14.6Z" fill="#111" /><path d="M6.6 9.4L3 13" fill="none" stroke="#111" stroke-width="1.7" /><path d="M14.6 1.4000000000000004L14.6 6.2L9.8 1.4000000000000004Z" fill="#111" /><path d="M9.4 6.6L13 3" fill="none" stroke="#111" stroke-width="1.7" /><path d="M1.4000000000000004 1.4000000000000004L1.4000000000000004 6.2L6.2 1.4000000000000004Z" fill="#111" /><path d="M6.6 6.6L3 3" fill="none" stroke="#111" stroke-width="1.7" /></svg></span><span class="cb"><svg class="ci" viewBox="0 0 16 16"><path d="M1.5 1.5H10.5V9.5H1.5Z" fill="none" stroke="#555" stroke-width="1" stroke-dasharray="1 1"/><path d="M2.6 11.5H9.4A1.3 1.3 0 0 1 9.4 14.5H2.6A1.3 1.3 0 0 1 2.6 11.5Z" fill="none" stroke="#333" stroke-width="1" /><path d="M12.5 2.8A1.3 1.3 0 0 1 15 2.8V13.2A1.3 1.3 0 0 1 12.5 13.2Z" fill="none" stroke="#333" stroke-width="1" /></svg></span><span class="sp"></span></div></div>
<div class="cbody"><p>Добрый день,</p><p style="letter-spacing:.04px"><b>Уважаемый ${contacts.name},</b></p><p style="letter-spacing:.081px">мы рады что вы зарегистрировались на нашем сервисе <b style="letter-spacing:0">WireCRM</b>,</p><p style="letter-spacing:.159px">если у вас появятся какие-либо вопросы, задавайте.</p><p>&nbsp;</p><p>&nbsp;</p><p>-------------------------------</p><p style="letter-spacing:.1px">С уважением,</p><p>команда WireCRM</p></div>
<div class="cbot"><span class="pth">body</span><span class="rsz"></span></div></div>

<div class="lbl" style="top:647.5px;letter-spacing:.08px">Организация</div>
<div class="s2" style="top:640.8px;color:#999;letter-spacing:-.14px">Выберите значение<i></i></div>
<div class="lbl" style="top:685px;letter-spacing:.38px">Контакт</div>
<div class="s2" style="top:678px">Дмитрий Попов<i></i><svg style="position:absolute;left:548px;top:13px" width="9" height="8" viewBox="0 0 9 8"><path d="M1.5 1L6.9 6.4M6.9 1L1.5 6.4" stroke="#111" stroke-width="1.6" fill="none"/></svg></div>
</div>
</body>
</html>
